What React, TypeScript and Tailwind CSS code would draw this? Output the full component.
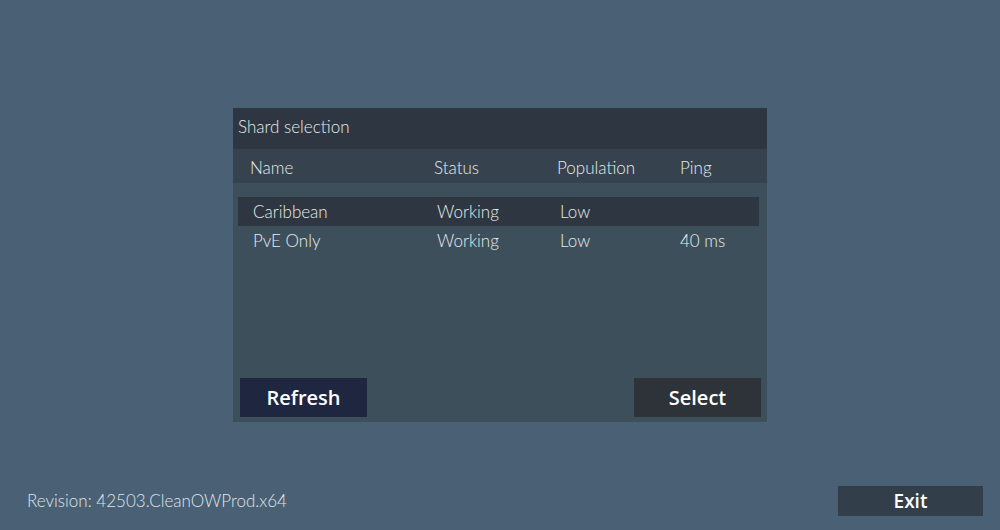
export default function App() {
  const rows = [
    { name: "Caribbean", status: "Working", population: "Low", ping: "", selected: true },
    { name: "PvE Only", status: "Working", population: "Low", ping: "40 ms", selected: false },
  ]

  return (
    <main
      className="w-[1000px] h-[530px] flex flex-col bg-[#4a6074] text-[#e6ebee]"
      style={{ fontFamily: "Lato, 'Open Sans', sans-serif" }}
    >
      {/* Shard selection panel */}
      <section className="mt-[108px] mx-auto w-[534px] h-[314px] flex flex-col bg-[#3e4f5c]">
        <div className="h-[41px] px-[5px] pt-[8px] bg-[#2e3741] text-[17px] font-light leading-[22px]">
          Shard selection
        </div>
        <div className="h-[34px] pt-[3px] flex items-center bg-[#36434f] text-[17px] font-light">
          <span className="pl-[17px] w-[201px]">Name</span>
          <span className="w-[123px]">Status</span>
          <span className="w-[123px]">Population</span>
          <span>Ping</span>
        </div>

        <div className="mt-[14px] px-[5px] flex flex-col">
          {rows.map((r) => (
            <div
              key={r.name}
              className={`h-[29px] w-[521px] flex items-center text-[17px] font-light ${
                r.selected ? "bg-[#2e3741]" : ""
              }`}
            >
              <span className="pl-[15px] w-[199px]">{r.name}</span>
              <span className="w-[123px]">{r.status}</span>
              <span className="w-[120px]">{r.population}</span>
              <span>{r.ping}</span>
            </div>
          ))}
        </div>

        <div
          className="mt-auto mb-[5px] pl-[7px] pr-[6px] flex justify-between"
          style={{ fontFamily: "'Open Sans', sans-serif" }}
        >
          <button className="w-[127px] h-[39px] bg-[#1e2640] text-[20px] font-semibold text-white">
            Refresh
          </button>
          <button className="w-[127px] h-[39px] bg-[#2e3339] text-[20px] font-semibold text-white">
            Select
          </button>
        </div>
      </section>

      {/* Footer */}
      <footer className="mt-auto mb-[14px] pl-[27px] pr-[17px] flex items-center justify-between">
        <span className="text-[17px] font-light text-[#dfe6ea]">Revision: 42503.CleanOWProd.x64</span>
        <button
          className="w-[145px] h-[30px] bg-[#323e49] text-[19px] font-semibold text-white"
          style={{ fontFamily: "'Open Sans', sans-serif" }}
        >
          Exit
        </button>
      </footer>
    </main>
  )
}
